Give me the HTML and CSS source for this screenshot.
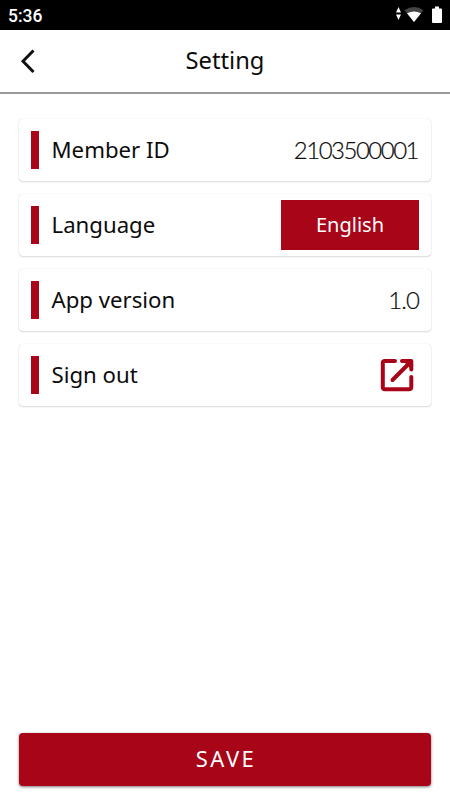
FILE: index.html
```html
<!DOCTYPE html>
<html lang="en">
<head>
<meta charset="utf-8">
<title>Setting</title>
<link rel="stylesheet" href="styles.css">
</head>
<body>
<div class="status">
  <span class="time">5:36</span>
  <svg class="status-icons" width="50" height="20" viewBox="0 0 50 20" fill="#fff">
    <path d="M1 7.500 3.500 2 6 7.500zM1 9.500h5L3.500 15z"/>
    <path d="M9.500 5.200Q19 -1 28.500 5.200L19 17z" fill="#444"/>
    <path d="M12 8.300Q19 4.500 26 8.300L19 17z"/>
    <path d="M40 1.500h4v2h2q1 0 1 1v12.500q0 1-1 1h-8q-1 0-1-1V4.500q0-1 1-1h2z"/>
  </svg>
</div>
<header class="header">
  <svg class="back" width="16" height="26" viewBox="0 0 16 26"><path d="M13.500 2.500 3 13.300 13.500 24"/></svg>
  <h1 class="title">Setting</h1>
</header>
<main class="list">
  <div class="card"><span class="bar"></span><span class="label">Member ID</span><span class="value">2103500001</span></div>
  <div class="card"><span class="bar"></span><span class="label">Language</span><button class="lang">English</button></div>
  <div class="card"><span class="bar"></span><span class="label">App version</span><span class="value version">1.0</span></div>
  <div class="card"><span class="bar"></span><span class="label">Sign out</span>
    <svg class="out" width="34" height="34" viewBox="0 0 34 34"><path d="M15 3H5Q2.800 3 2.800 5V29Q2.800 31.200 5 31.200H29Q31.300 31.200 31.300 29V19M12.500 22 30 4.500M22 3H31.300V11.500"/><path class="tip" d="M24 3H31.300V10.500z"/></svg></div>
</main>
<button class="save">SAVE</button>
</body>
</html>
```
FILE: styles.css
```css
* { box-sizing: border-box; }
body { margin: 0; height: 800px; display: flex; flex-direction: column; background: #fff; color: #0c0c0c; font-family: "Noto Sans", sans-serif; overflow: hidden; }
.status { height: 30px; background: #000; color: #fff; display: flex; align-items: center; justify-content: space-between; padding: 0 5px 0 8px; }
.time { font: 500 17.500px Roboto, sans-serif; padding-top: 2px; }
.header { height: 64px; border-bottom: 2px solid #999; display: grid; grid-template-columns: 50px 1fr 50px; align-items: center; }
.back { margin-left: 20px; fill: none; stroke: #111; stroke-width: 3; }
.title { margin: 0; padding-bottom: 2px; text-align: center; font-size: 23.700px; font-weight: 400; }
.list { padding: 25px 19px 0; display: flex; flex-direction: column; gap: 13px; }
.card { height: 62px; display: flex; align-items: center; padding: 0 12px; border-radius: 4px; box-shadow: 0 0 1px #0003, 0 1px 2px #0002; }
.bar { width: 8px; height: 38px; background: #a90519; margin-right: 12.500px; }
.label { font-size: 22.200px; flex: 1; padding-bottom: 2px; }
.value { font-family: Lato, sans-serif; font-weight: 300; font-size: 24px; letter-spacing: -1.500px; padding: 0 1px 1px 0; -webkit-text-stroke: 0.2px; }
.version { letter-spacing: -0.900px; padding-right: 0; }
.lang { width: 138px; height: 50px; border: 0; padding: 0 0 2px; background: #a90519; color: #fff; font: 20px "Noto Sans", sans-serif; }
.out { margin-right: 5px; fill: none; stroke: #a90519; stroke-width: 4; stroke-linecap: round; stroke-linejoin: round; }
.tip { fill: #a90519; stroke-width: 1; }
.save { margin: auto 19px 14px; padding: 0 0 3px 2px; height: 53px; border: 0; border-radius: 4px; background: #a90519; color: #fff; font: 22px "Noto Sans", sans-serif; letter-spacing: 2.400px; box-shadow: 0 1px 3px #0008; }
```
